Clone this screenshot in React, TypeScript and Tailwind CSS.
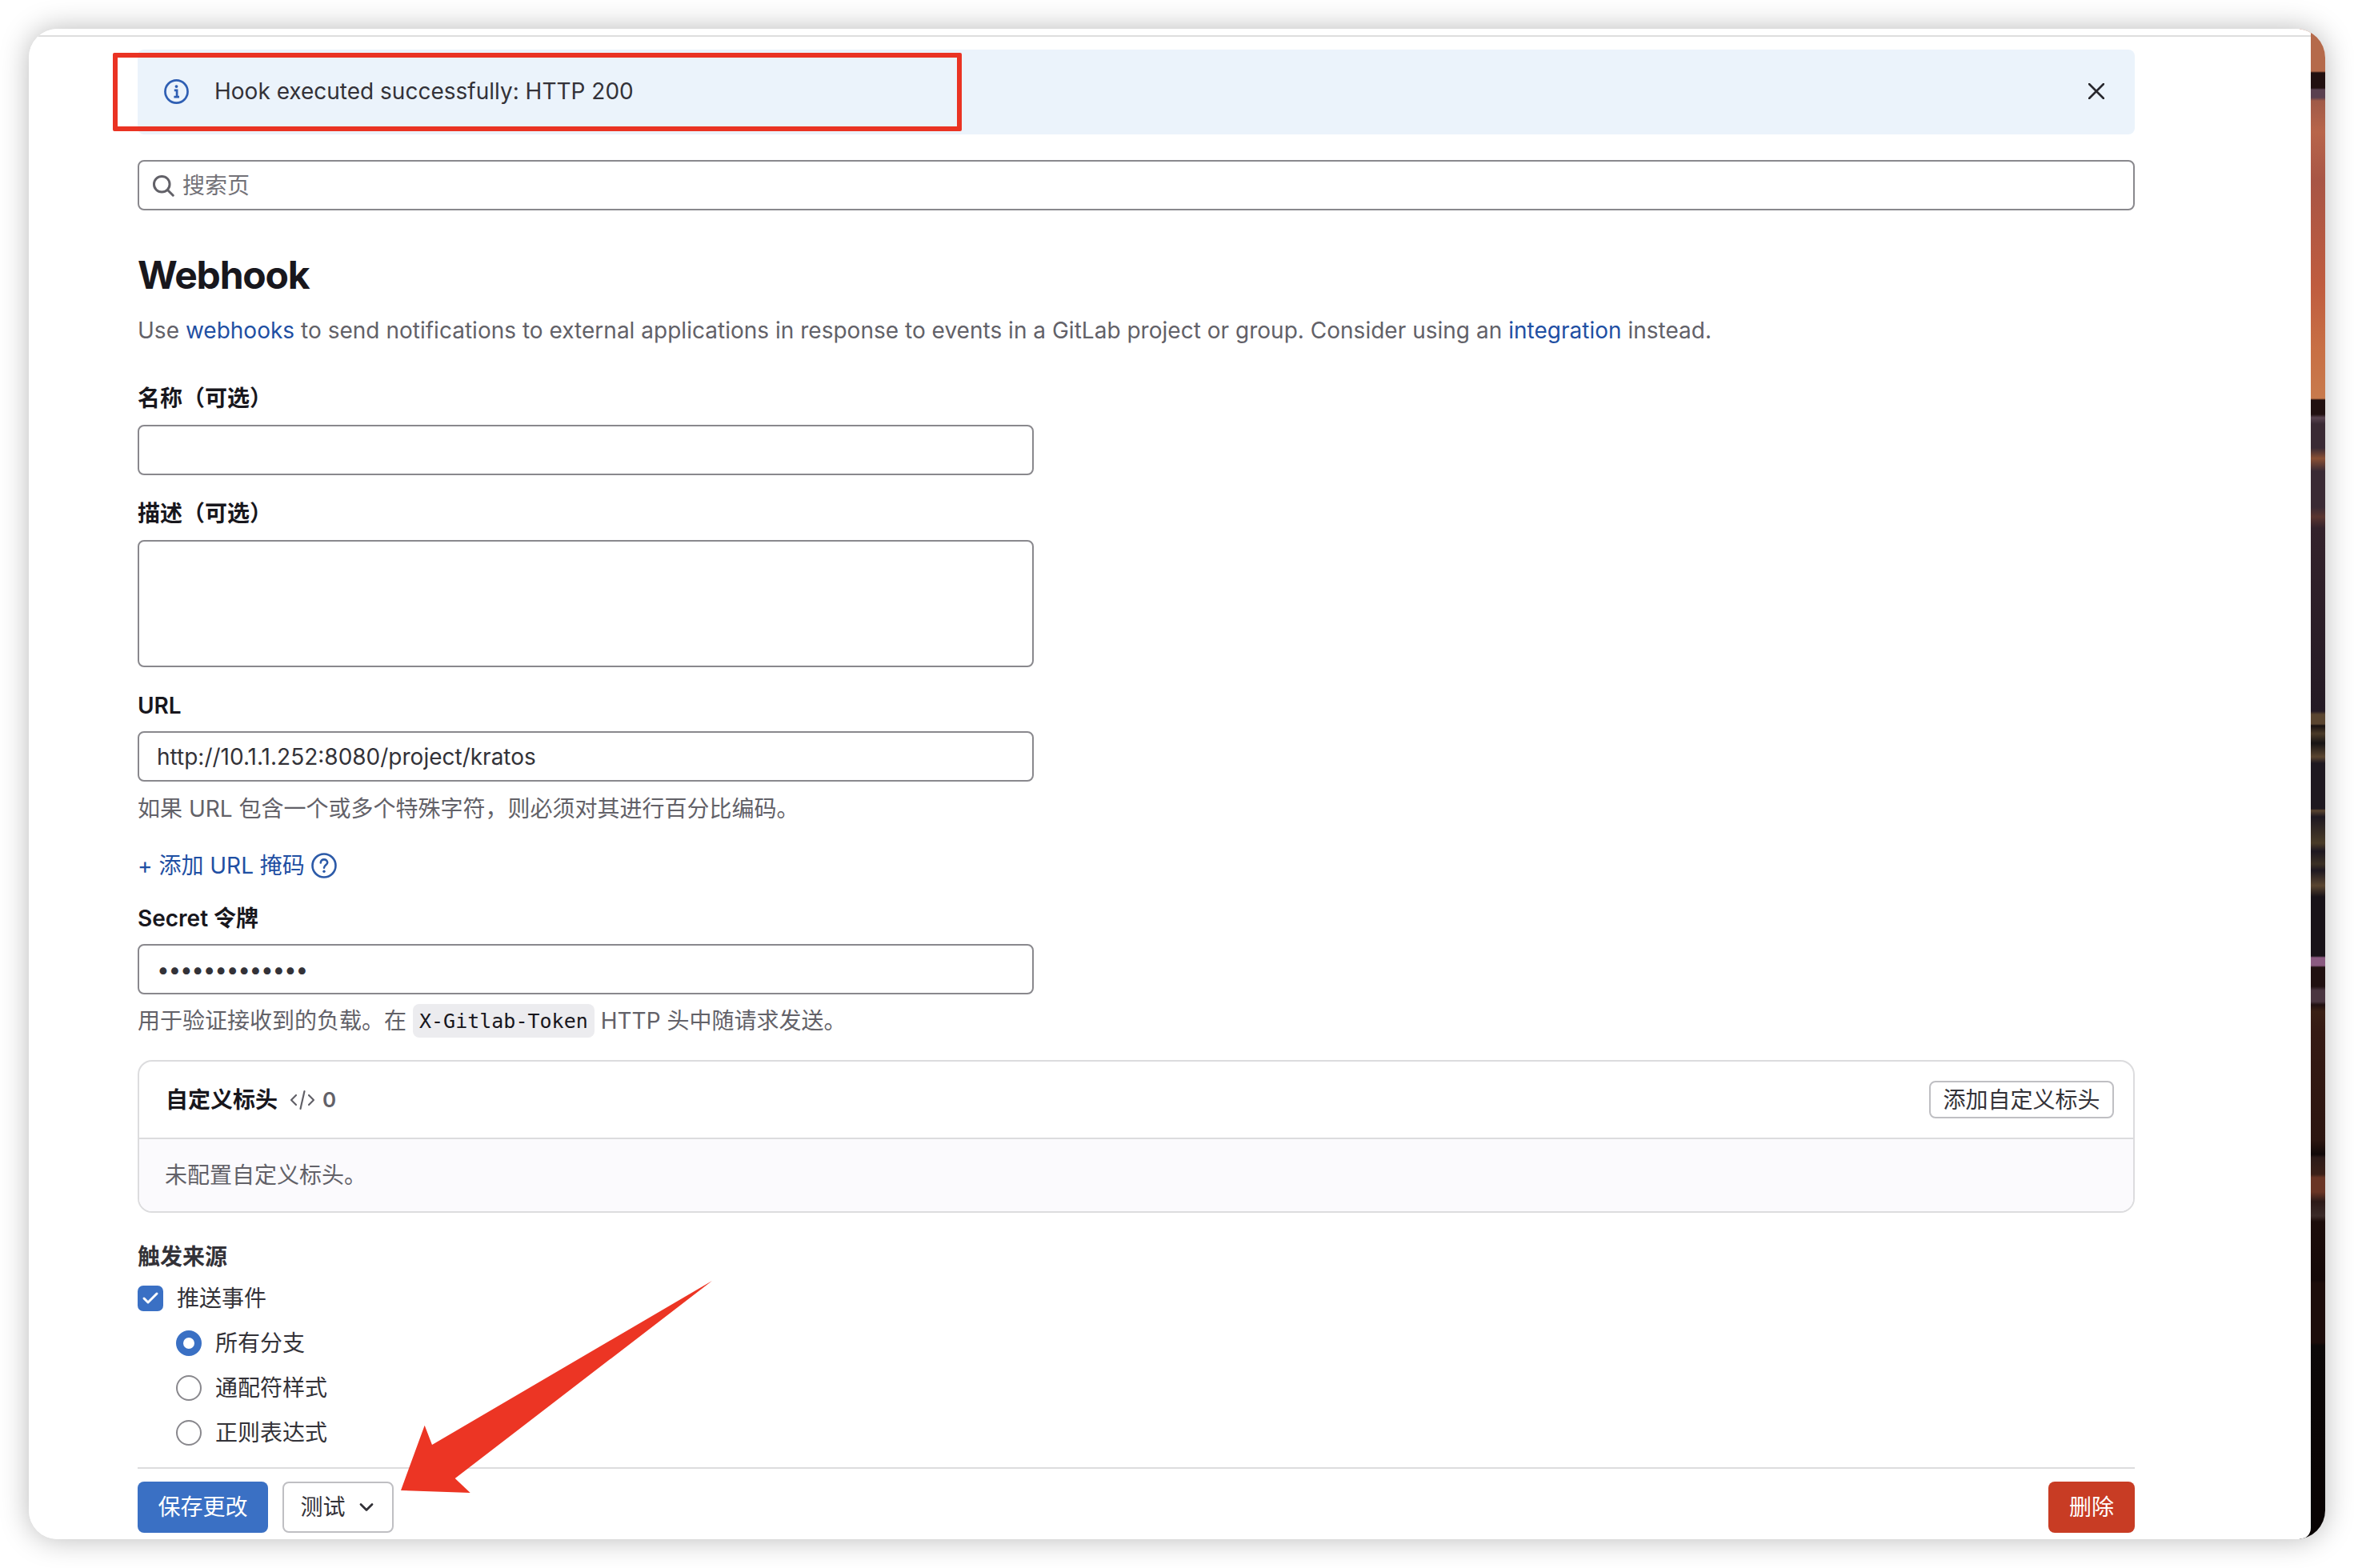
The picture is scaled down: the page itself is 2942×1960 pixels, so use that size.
import React from 'react';
import { ChevronDown, Check } from 'lucide-react';

const inputClass =
  'block w-[1120px] h-[63px] rounded-[8px] border-2 border-[#89888d] bg-white px-[22px] text-[28px] text-[#333238] outline-none';

function InfoIcon() {
  return (
    <svg width="31" height="31" viewBox="0 0 16 16" fill="none" className="shrink-0">
      <circle cx="8" cy="8" r="7.25" stroke="#2f5fb3" strokeWidth="1.4" />
      <circle cx="8" cy="4.7" r="1" fill="#2f5fb3" />
      <path d="M6.6 7.2H8.3V11.2M6.4 11.4H9.8" stroke="#2f5fb3" strokeWidth="1.4" />
    </svg>
  );
}

function CloseIcon() {
  return (
    <svg width="20" height="20" viewBox="0 0 20 20" fill="none" className="shrink-0">
      <path d="M1 1L19 19M19 1L1 19" stroke="#28272d" strokeWidth="2.6" strokeLinecap="round" />
    </svg>
  );
}

function SearchIcon() {
  return (
    <svg width="28" height="28" viewBox="0 0 16 16" fill="none" className="shrink-0">
      <circle cx="7" cy="7" r="5.6" stroke="#626168" strokeWidth="1.7" />
      <path d="M11 11L15 15" stroke="#626168" strokeWidth="1.7" strokeLinecap="round" />
    </svg>
  );
}

function HelpIcon() {
  return (
    <svg width="32" height="32" viewBox="0 0 16 16" fill="none" className="shrink-0">
      <circle cx="8" cy="8" r="7.25" stroke="#2c5aa8" strokeWidth="1.3" />
      <path d="M5.9 6.2C5.9 5 6.8 4.2 8 4.2C9.2 4.2 10.1 5 10.1 6.1C10.1 7.6 8 7.7 8 9.4" stroke="#2c5aa8" strokeWidth="1.3" strokeLinecap="round" />
      <circle cx="8" cy="11.6" r="0.85" fill="#2c5aa8" />
    </svg>
  );
}

function CodeIcon() {
  return (
    <svg width="32" height="28" viewBox="0 0 32 28" fill="none" className="shrink-0">
      <path d="M8 8L2 14L8 20M24 8L30 14L24 20M18.5 3L13.5 25" stroke="#626168" strokeWidth="2.2" strokeLinecap="round" strokeLinejoin="round" />
    </svg>
  );
}

function Radio({ checked, label }: { checked?: boolean; label: string }) {
  return (
    <div className="flex items-center h-10 pl-[48px]">
      {checked ? (
        <span className="w-8 h-8 rounded-full border-[9px] border-[#3a70c4] bg-white shrink-0" />
      ) : (
        <span className="w-8 h-8 rounded-full border-2 border-[#89888d] bg-white shrink-0" />
      )}
      <span className="ml-[17px] text-[28px] leading-10 text-[#333238]">{label}</span>
    </div>
  );
}

export default function App() {
  return (
    <div className="relative w-[2942px] h-[1960px] overflow-hidden bg-white pt-[36px] font-['Inter','Noto_Sans_CJK_SC',sans-serif]">
      <div className="ml-[36px] flex w-[2870px] h-[1888px] overflow-hidden rounded-[36px] bg-white shadow-[0_0_36px_rgba(0,0,0,0.28)]">
        <main className="relative z-10 flex-1 flex flex-col bg-white rounded-br-[14px]">
          <div className="mt-[8px] h-[2px] bg-[#dedede]" />
          <div className="pl-[136px] pr-[220px]">
            {/* alert */}
            <div className="mt-[16px] flex h-[106px] items-center justify-between rounded-[8px] bg-[#ebf3fb] pb-[2px] pl-[33px] pr-[38px]">
              <div className="flex items-center gap-[32px]">
                <InfoIcon />
                <span className="text-[28px] text-[#333238]">Hook executed successfully: HTTP 200</span>
              </div>
              <CloseIcon />
            </div>

            {/* search */}
            <div className="mt-[32px] flex h-[63px] items-center gap-[10px] rounded-[8px] border-2 border-[#89888d] pl-[16px]">
              <SearchIcon />
              <span className="text-[28px] text-[#737278]">搜索页</span>
            </div>

            <h1 className="mt-[53px] h-[56px] text-[48px] font-bold leading-[56px] tracking-[-0.025em] text-[#18171d]">Webhook</h1>
            <p className="mt-[21px] h-10 text-[28px] leading-10 tracking-[0.015px] text-[#626168]">
              Use <a className="text-[#1f4fa3]">webhooks</a> to send notifications to external applications in response to events in a GitLab project or group. Consider using an <a className="text-[#1f4fa3]">integration</a> instead.
            </p>

            <label className="mt-[47px] block h-9 text-[28px] font-semibold leading-9 text-[#18171d]">名称（可选）</label>
            <input className={`mt-[15px] ${inputClass}`} readOnly />

            <label className="mt-[30px] block h-9 text-[28px] font-semibold leading-9 text-[#18171d]">描述（可选）</label>
            <textarea className="mt-[15px] block w-[1120px] h-[159px] resize-none rounded-[8px] border-2 border-[#89888d] bg-white outline-none" readOnly />

            <label className="mt-[30px] block h-9 text-[28px] font-semibold leading-9 text-[#18171d]">URL</label>
            <input className={`mt-[14px] ${inputClass}`} readOnly value="http://10.1.1.252:8080/project/kratos" />
            <p className="mt-[14px] h-10 text-[28px] leading-10 text-[#626168]">如果 URL 包含一个或多个特殊字符，则必须对其进行百分比编码。</p>

            <div className="mt-[31px] flex h-10 items-center gap-[8px] text-[28px] leading-10 text-[#1f4fa3]">
              <span>+ 添加 URL 掩码</span>
              <HelpIcon />
            </div>

            <label className="mt-[28px] block h-9 text-[28px] font-semibold leading-9 text-[#18171d]">Secret 令牌</label>
            <input className={`mt-[14px] tracking-[-1.3px] ${inputClass}`} readOnly type="password" value="abcdefghijklm" />
            <div className="mt-[13px] flex h-10 items-center text-[28px] leading-10 text-[#626168]">
              <span>用于验证接收到的负载。在</span>
              <code className="mx-[8px] h-[42px] rounded-[8px] bg-[#ececef] px-[8px] font-['DejaVu_Sans_Mono',monospace] text-[25px] leading-[44px] text-[#18171d]">X-Gitlab-Token</code>
              <span>HTTP 头中随请求发送。</span>
            </div>

            {/* custom headers card */}
            <section className="mt-[29px] h-[191px] overflow-hidden rounded-[18px] border-2 border-[#dcdcde]">
              <div className="flex h-[97px] items-center justify-between border-b-2 border-[#dcdcde] pl-[33px] pr-[24px]">
                <div className="flex items-center">
                  <span className="text-[28px] font-semibold text-[#18171d]">自定义标头</span>
                  <span className="ml-[15px]"><CodeIcon /></span>
                  <span className="ml-[9px] text-[26px] font-semibold text-[#626168]">0</span>
                </div>
                <button className="h-[47px] w-[231px] rounded-[8px] border-2 border-[#bfbfc3] bg-white text-[28px] leading-none text-[#333238]">添加自定义标头</button>
              </div>
              <div className="flex h-[90px] items-center bg-[#fbfafd] pl-[32px] text-[28px] text-[#626168]">未配置自定义标头。</div>
            </section>

            <div className="mt-[37px] h-9 text-[28px] font-semibold leading-9 text-[#333238]">触发来源</div>

            <div className="mt-[14px] flex h-10 items-center">
              <span className="flex h-8 w-8 shrink-0 items-center justify-center rounded-[7px] bg-[#3a70c4]">
                <Check className="h-6 w-6 text-white" strokeWidth={3} />
              </span>
              <span className="ml-[17px] text-[28px] leading-10 text-[#333238]">推送事件</span>
            </div>

            <div className="mt-[16px] flex flex-col gap-[16px]">
              <Radio checked label="所有分支" />
              <Radio label="通配符样式" />
              <Radio label="正则表达式" />
            </div>

            <div className="mt-[23px] h-[2px] bg-[#dcdcde]" />

            <div className="mt-[16px] flex items-center justify-between">
              <div className="flex items-center gap-[18px]">
                <button className="h-[64px] w-[163px] rounded-[8px] bg-[#3a70c4] text-[28px] text-white">保存更改</button>
                <button className="flex h-[64px] w-[139px] items-center justify-center gap-[12px] rounded-[8px] border-2 border-[#bfbfc3] bg-white pl-[2px] text-[28px] text-[#333238]">
                  测试
                  <ChevronDown className="h-7 w-7 text-[#333238]" strokeWidth={2.4} />
                </button>
              </div>
              <button className="h-[64px] w-[108px] rounded-[8px] bg-[#c83c24] text-[28px] text-white">删除</button>
            </div>
          </div>
        </main>

        {/* sliver of the desktop wallpaper behind the window */}
        <div className="-ml-[14px] w-[32px] shrink-0 bg-[linear-gradient(180deg,#b56a4b_0px,#b56a4b_53px,#221010_55px,#221010_74px,#5a4050_76px,#5a4050_86px,#a05a48_90px,#b8654a_129px,#a85545_190px,#bf5c3f_320px,#c87045_402px,#c87a4c_462px,#211010_464px,#211010_482px,#5a4450_486px,#3a2a34_494px,#3a2a34_524px,#8a5035_537px,#3a2a34_553px,#3a2a34_598px,#5a3530_610px,#33222b_624px,#241a24_853px,#5a4530_857px,#5a4530_869px,#171010_871px,#4a3a28_881px,#171414_893px,#5a4530_910px,#1e1820_918px,#1e1820_975px,#5a4530_977px,#1e1820_985px,#4a3c28_1018px,#1e1820_1028px,#3a3024_1044px,#1e1820_1052px,#5a4530_1071px,#181218_1085px,#181218_1159px,#8a5a80_1161px,#8a5a80_1171px,#201010_1173px,#201010_1197px,#4a3540_1202px,#4a3540_1216px,#201010_1220px,#3a2015_1228px,#351a14_1254px,#2c1510_1389px,#100808_1407px,#2c1a18_1411px,#3c2018_1432px,#6a3525_1436px,#6a3525_1454px,#2c1a18_1466px,#3a2a28_1484px,#1c0c0a_1491px,#140808_1564px,#1c0c0a_1568px,#1c0c0a_1642px,#0c0808_1646px,#080202_1892px)]" />
      </div>

      {/* annotations drawn on top of the screenshot */}
      <div className="absolute z-20 left-[141px] top-[66px] h-[98px] w-[1061px] rounded-[2px] border-[6px] border-[#ea3323]" />
      <svg className="absolute z-20 left-0 top-0 pointer-events-none" width="2942" height="1960" viewBox="0 0 2942 1960">
        <polygon points="890,1601 540,1806 530.7,1781.7 501,1863 587.7,1866 568.7,1848" fill="#ec3524" />
      </svg>
    </div>
  );
}
